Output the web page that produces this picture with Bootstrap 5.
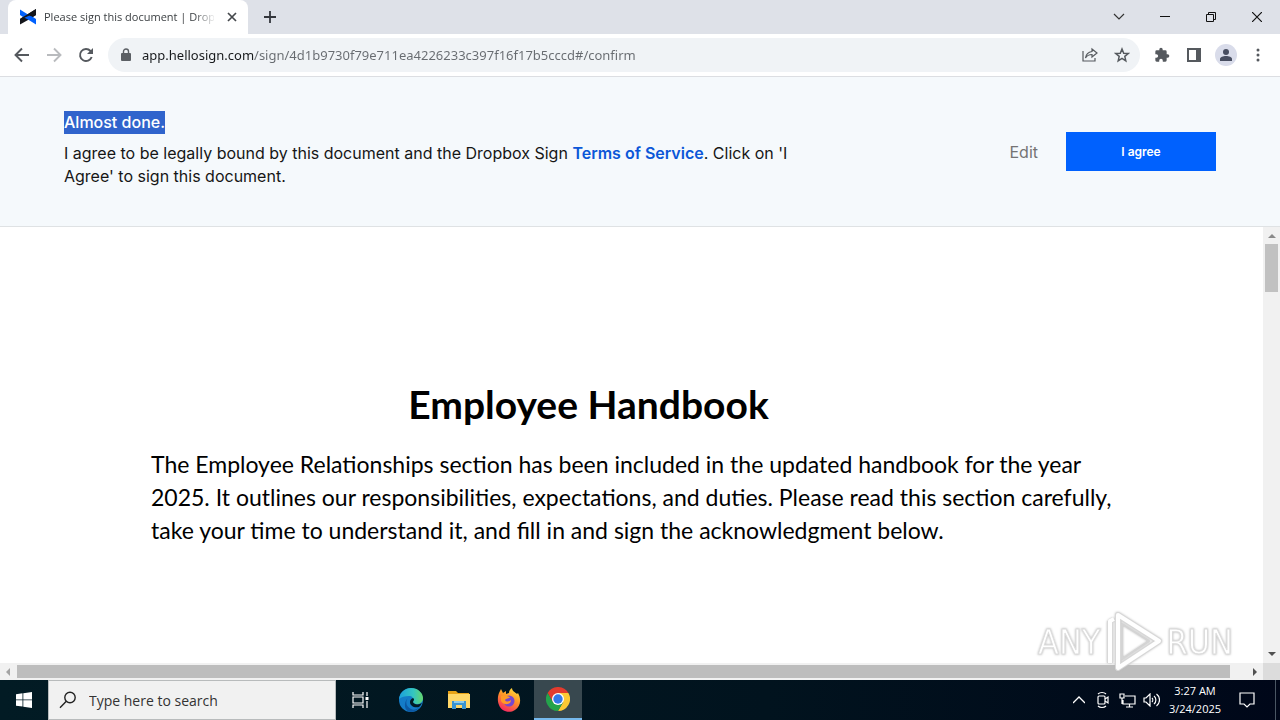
<!DOCTYPE html>
<html lang="en">
<head>
<meta charset="utf-8">
<meta name="viewport" content="width=device-width, initial-scale=1">
<title>Please sign this document | Dropbox Sign</title>
<link href="https://cdn.jsdelivr.net/npm/bootstrap@5.3.0/dist/css/bootstrap.min.css" rel="stylesheet">
<style>
  body { font-family: "Open Sans", "Noto Sans", sans-serif; color: #000; }
  svg { display: block; flex: none; }
  .plain { border: 0; background: none; padding: 0; color: inherit; display: flex; align-items: center; justify-content: center; }

  /* browser window */
  .tabstrip { height: 34px; background: #dee1e8; padding-left: 8px; color: #202124; }
  .browser-tab { width: 240px; height: 34px; background: #fff; border-radius: 8px 8px 0 0; padding: 0 8px 0 12px; }
  .tab-title { font-size: 11px; line-height: 18px; color: #3c4043; width: 170px; margin-left: 8px;
    -webkit-mask-image: linear-gradient(90deg, #000 150px, transparent 172px); mask-image: linear-gradient(90deg, #000 150px, transparent 172px); }
  .tab-close { width: 16px; height: 16px; }
  .win-btn { width: 46px; height: 30px; color: #111; }
  .toolbar { height: 43px; border-bottom: 1px solid #dcdee2; color: #55595e; padding: 0 6px; }
  .tool-btn { width: 32px; height: 32px; }
  .omnibox { height: 34px; border-radius: 17px; background: #f0f3f6; padding: 0 2px 0 12px; margin: 0 6px 0 6px; }
  .url { font-family: "Noto Sans", sans-serif; font-size: 13px; line-height: 20px; color: #5f6368; border: 0; outline: 0; padding: 0; margin-left: 10px;
    background: linear-gradient(90deg, #17191c 112px, #676b70 112px); -webkit-background-clip: text; background-clip: text; -webkit-text-fill-color: transparent; }
  .avatar { width: 22px; height: 22px; background: #d9dcea; color: #474d60; }

  /* signing banner */
  .confirm-bar { height: 150px; background: #f5f9fc; border-bottom: 1px solid #dfe2e4; padding: 0 64px; font-family: Inter, "Liberation Sans", sans-serif; }
  .confirm-copy { font-size: 16px; line-height: 23px; color: #161616; }
  .chosen { background: #3064cc; color: #fff; font-weight: 500; }
  .terms { color: #0b57d8; text-decoration: none; font-weight: 600; }
  .edit-link { color: #747474; text-decoration: none; font-size: 16px; }
  .agree-btn { width: 150px; height: 39px; background: #0061fe; color: #fff; border: 0; border-radius: 0; font-size: 12px; font-weight: 600; padding: 0; }
  .agree-btn:hover { background: #0057e5; }

  /* document */
  .viewer { min-height: 0; }
  .paper { background: #fff; font-family: Lato, Carlito, sans-serif; padding: 150px 86px 0 151px; overflow: hidden; }
  .paper h1 { font-size: 39px; line-height: 54px; font-weight: 700; margin: 0 151px 17px 0; text-align: center; }
  .paper p { font-size: 23px; line-height: 33px; margin: 0; white-space: nowrap; }
  .vbar { width: 17px; background: #f1f1f1; }
  .vthumb { height: 48px; background: #c1c1c1; margin: 0 2px; }
  .hbar { height: 17px; background: #f1f1f1; }
  .hthumb { background: #bdbdbd; margin: 2px 0; }
  .arrow { width: 17px; height: 17px; }
  .corner { width: 17px; background: #dcdcdc; }
  .watermark { right: 47px; bottom: 46px; font-family: "Liberation Sans Narrow", "DejaVu Sans Condensed", sans-serif; font-size: 34px; line-height: 64px; color: #fff; -webkit-text-stroke: 1px #ddd; filter: drop-shadow(0 0 1px #bbb); pointer-events: none; }

  /* taskbar */
  .taskbar { height: 40px; background: linear-gradient(90deg, #021b24, #01131e 60%, #000719); color: #fff; }
  .task-btn { width: 48px; height: 40px; }
  .task-gap { width: 50px; height: 40px; }
  .running { background: #38484f; border-bottom: 2px solid #76b9ed; }
  .search-area { width: 288px; height: 40px; background: #f1f1f1; border: 1px solid #b8bbbc; padding-left: 10px; color: #222; }
  .search-area input { border: 0; outline: 0; background: none; font-size: 14px; padding: 0; color: #333; }
  .search-area input::placeholder { color: #333; opacity: 1; }
  .tray { width: 24px; height: 40px; }
  .notice { width: 40px; height: 40px; }
  .clock { font-size: 11px; line-height: 18px; width: 64px; }
  .desk-edge { width: 5px; height: 40px; border-left: 1px solid #4a5663; }
</style>
</head>
<body class="vh-100 d-flex flex-column overflow-hidden">

<header>
  <div class="tabstrip d-flex align-items-center">
    <div class="browser-tab d-flex align-items-center">
      <svg width="16" height="16" viewBox="0 0 16 16"><path fill="#14161c" d="M16 0v6l-3 2-5 3-8 4.500V10l3-2 5-3z"/><path fill="#0061fe" d="M0 .5l8 5 5 2.500 3 2v5.500l-8-5L3 8 0 6z"/><path fill="#14161c" d="M16 0v6l-3 1.500-3.500-1L5 8.500 0 12v-2l3-2 5-3z"/></svg>
      <span class="tab-title text-nowrap">Please sign this document | Drop</span>
      <button class="plain ms-auto tab-close" aria-label="Close tab"><svg width="10" height="10" viewBox="0 0 10 10" stroke="#45484c" stroke-width="1.700"><path d="M1 1l8 8M9 1L1 9"/></svg></button>
    </div>
    <button class="plain tool-btn ms-1" aria-label="New tab"><svg class="ms-1" width="12" height="12" viewBox="0 0 12 12" stroke="#34373d" stroke-width="1.800"><path d="M6 0v12M0 6h12"/></svg></button>
    <div class="d-flex ms-auto">
      <button class="plain win-btn" aria-label="Search tabs"><svg width="12" height="8" viewBox="0 0 12 8" fill="none" stroke="#333" stroke-width="1.200"><path d="M1 1l5 5 5-5"/></svg></button>
      <button class="plain win-btn" aria-label="Minimize"><svg width="10" height="10" viewBox="0 0 10 10"><path fill="#111" d="M0 4h10v1H0z"/></svg></button>
      <button class="plain win-btn" aria-label="Restore"><svg width="10" height="10" viewBox="0 0 10 10" fill="none" stroke="#111"><path d="M.5 2.500h7v7h-7zM2.500 2.500v-2h7v7h-2"/></svg></button>
      <button class="plain win-btn" aria-label="Close"><svg width="10" height="10" viewBox="0 0 10 10" stroke="#111" stroke-width="1.200"><path d="M0 0l10 10M10 0L0 10"/></svg></button>
    </div>
  </div>
  <nav class="toolbar d-flex align-items-center" aria-label="Browser">
    <button class="plain tool-btn" aria-label="Back"><svg width="16" height="16" viewBox="0 0 16 16" fill="none" stroke="currentColor" stroke-width="1.900"><path d="M15 8H2M8 1.500L1.500 8 8 14.500"/></svg></button>
    <button class="plain tool-btn" aria-label="Forward"><svg width="16" height="16" viewBox="0 0 16 16" fill="none" stroke="#b9bbbe" stroke-width="1.900"><path d="M1 8h13M8 1.500L14.500 8 8 14.500"/></svg></button>
    <button class="plain tool-btn" aria-label="Reload"><svg width="16" height="16" viewBox="0 0 16 16" fill="none" stroke="currentColor" stroke-width="1.900"><path d="M13.700 10A6 6 0 1 1 12.500 4L14 5.500"/><path fill="currentColor" stroke="none" d="M15 1v6H9z"/></svg></button>
    <div class="omnibox d-flex align-items-center flex-grow-1">
      <svg width="12" height="14" viewBox="0 0 12 14"><rect x="1" y="5" width="10" height="8" rx="1" fill="#5b5f64"/><path d="M3.500 6V3.500a2.500 2.500 0 0 1 5 0V6" fill="none" stroke="#5b5f64" stroke-width="1.400"/></svg>
      <input class="url flex-grow-1" aria-label="Address" value="app.hellosign.com/sign/4d1b9730f79e711ea4226233c397f16f17b5cccd#/confirm">
      <button class="plain tool-btn" aria-label="Share"><svg width="16" height="16" viewBox="0 0 16 16" fill="none" stroke="currentColor" stroke-width="1.200"><path d="M1 4v10h12v-3M10 2l5 4-5 4V7.500C7 7.500 5 8.500 3.500 11 4 7 6.500 5 10 4.500z"/></svg></button>
      <button class="plain tool-btn" aria-label="Bookmark"><svg width="16" height="16" viewBox="0 0 16 16" fill="none" stroke="currentColor" stroke-width="1.500"><path d="M8 2l1.700 4.200 4.500.3-3.400 2.900 1 4.400L8 11.400l-3.800 2.400 1-4.400-3.400-2.900 4.500-.3z"/></svg></button>
    </div>
    <button class="plain tool-btn" aria-label="Extensions"><svg width="16" height="16" viewBox="0 0 24 24" fill="currentColor"><path d="M20.500 11H19V7a2 2 0 0 0-2-2h-4V3.500a2.500 2.500 0 0 0-5 0V5H4a2 2 0 0 0-2 2v3.800h1.500a2.700 2.700 0 0 1 0 5.400H2V20a2 2 0 0 0 2 2h3.800v-1.500a2.700 2.700 0 0 1 5.400 0V22H17a2 2 0 0 0 2-2v-4h1.500a2.500 2.500 0 0 0 0-5z"/></svg></button>
    <button class="plain tool-btn" aria-label="Side panel"><svg width="14" height="14" viewBox="0 0 14 14"><path fill="currentColor" fill-rule="evenodd" d="M0 0h14v14H0zM2 2v10h7V2z"/></svg></button>
    <button class="plain tool-btn" aria-label="Profile"><span class="avatar rounded-circle d-flex align-items-center justify-content-center"><svg width="14" height="14" viewBox="0 0 14 14" fill="currentColor"><circle cx="7" cy="4" r="3"/><path d="M1 13v-2c0-4 12-4 12 0v2z"/></svg></span></button>
    <button class="plain tool-btn" aria-label="Menu"><svg width="4" height="14" viewBox="0 0 4 14" fill="currentColor"><circle cx="2" cy="2" r="1.500"/><circle cx="2" cy="7" r="1.500"/><circle cx="2" cy="12" r="1.500"/></svg></button>
  </nav>
</header>

<section class="confirm-bar d-flex align-items-center">
  <div class="confirm-copy me-auto">
    <p class="mb-2"><span class="chosen d-inline-block">Almost done.</span></p>
    <p class="mb-1">I agree to be legally bound by this document and the Dropbox Sign <a href="#" class="terms">Terms of Service</a>. Click on 'I<br>Agree' to sign this document.</p>
  </div>
  <a href="#" class="edit-link me-4">Edit</a>
  <button type="button" class="btn agree-btn ms-1">I agree</button>
</section>

<main class="viewer d-flex flex-column flex-grow-1 position-relative">
  <div class="d-flex flex-grow-1 overflow-hidden">
    <article class="paper flex-grow-1">
      <h1>Employee Handbook</h1>
      <p>The Employee Relationships section has been included in the updated handbook for the year<br>2025. It outlines our responsibilities, expectations, and duties. Please read this section carefully,<br>take your time to understand it, and fill in and sign the acknowledgment below.</p>
    </article>
    <div class="vbar d-flex flex-column">
      <svg class="arrow" viewBox="0 0 17 17"><path fill="#8a8a8a" d="M5 11h8L9 7z"/></svg>
      <div class="vthumb"></div>
      <svg class="arrow mt-auto" viewBox="0 0 17 17"><path fill="#505050" d="M5 6h8l-4 4z"/></svg>
    </div>
  </div>
  <div class="hbar d-flex">
    <svg class="arrow" viewBox="0 0 17 17"><path fill="#a3a3a3" d="M10 5v8L6 9z"/></svg>
    <div class="hthumb flex-grow-1"></div>
    <div class="d-flex ps-3"><svg class="arrow" viewBox="0 0 17 17"><path fill="#505050" d="M7 5v8l4-4z"/></svg></div>
    <div class="corner"></div>
  </div>
</main>

<div class="watermark position-absolute d-flex align-items-center">
  <span>ANY</span>
  <svg width="66" height="64" viewBox="0 0 66 64" fill="none" stroke-linejoin="round"><path stroke="#d8d8d8" stroke-width="6" d="M10 53V11M18 5l41 26-41 27z"/><path stroke="#fff" stroke-width="4" d="M10 53V11l4-2M18 5l41 26-41 27z"/><path stroke="#d4d4d4" stroke-width="2" d="M22 14l27 17-27 18z"/></svg>
  <span>RUN</span>
</div>

<footer class="taskbar d-flex align-items-center">
  <button class="plain task-btn" aria-label="Start"><svg width="16" height="16" viewBox="0 0 16 16" fill="#fff"><path d="M0 2.200l6.500-.9v6.200H0zM7.300 1.200L16 0v7.500H7.300zM0 8.300h6.500v6.300L0 13.700zM7.300 8.300H16V16l-8.700-1.200z"/></svg></button>
  <label class="search-area d-flex align-items-center">
    <svg width="18" height="18" viewBox="0 0 18 18" fill="none" stroke="#222" stroke-width="1.400"><circle cx="11" cy="6.500" r="5.200"/><path d="M7.300 10.300L1 16.700"/></svg>
    <input class="ms-2 ps-1 flex-grow-1" type="search" aria-label="Search" placeholder="Type here to search">
  </label>
  <button class="plain task-btn" aria-label="Task view"><svg width="17" height="16" viewBox="0 0 17 16" fill="none" stroke="#fff" stroke-width="1.200"><path d="M1 0v3h10V0M1 5h10v6H1zM1 16v-3h10v3M15 0v4M15 9v7"/><path stroke-width="3" d="M13.500 6.500h3"/></svg></button>
  <button class="plain task-gap" aria-label="Microsoft Edge"><svg class="ms-1" width="24" height="24" viewBox="0 0 24 24"><defs><linearGradient id="edgeTop" x1="0" x2="1"><stop stop-color="#1b9fdc"/><stop offset=".6" stop-color="#34c6c1"/><stop offset="1" stop-color="#65d66c"/></linearGradient></defs><circle cx="12" cy="12" r="12" fill="#147cc8"/><path fill="url(#edgeTop)" d="M0 11C1 4 6 0 12 0c7 0 12 5 12 10 0 4-3 6-6 6-3 0-5-1-4-3 1-3-1-5-4-5-4 0-8 1-10 3z"/><path fill="#0c59a4" d="M9 10c-3 3-2 9 3 11 4 2 8-1 9.500-3A12 12 0 0 1 12 24C5 24 4 14 9 10z"/><path fill="#021b24" d="M14 10c2 1 .5 3 0 4 1 3 6 3 9 1-1 2-2 3-3 4-5 1-9-1-9-5 0-2 1-3 3-4z"/></svg></button>
  <button class="plain task-gap" aria-label="File Explorer"><svg width="22" height="20" viewBox="0 0 22 20"><path fill="#e8a317" d="M0 1h8l2 2h11v4H0z"/><path fill="#ffd768" d="M0 4h22v14H0z"/><path fill="#3a94d1" d="M4 11h14v8h-4v-4H8v4H4z"/><path fill="#8ccbed" d="M6 11h10v2H6z"/></svg></button>
  <button class="plain task-gap" aria-label="Firefox"><svg width="24" height="24" viewBox="0 0 24 24"><defs><linearGradient id="fox" x1=".8" y1="0" x2=".3" y2="1"><stop stop-color="#ffe13d"/><stop offset=".45" stop-color="#ff9527"/><stop offset="1" stop-color="#f52463"/></linearGradient></defs><path fill="url(#fox)" d="M2 5l2-4 2 4 3-2v3l3-1c0-2 1-4 3-5 0 3 3 4 5 6l1-1c4 7 2 14-3 17-6 4-14 1-16-5C0 12 1 8 2 5z"/><circle cx="12" cy="13" r="5.500" fill="#7747cf"/><path fill="#ff9a26" d="M4 8c3-2 6 0 9 1-1 2-4 1-5 3 1 2 4 2 6 0 0 5-7 6-10 1z"/></svg></button>
  <button class="plain task-btn running" aria-label="Google Chrome"><svg width="24" height="24" viewBox="0 0 24 24"><path fill="#e33b2e" d="M1.600 6A12 12 0 0 1 22.400 6H12z"/><path fill="#e33b2e" d="M1.600 6L6.800 15 12 6z"/><path fill="#fcc934" d="M22.400 6A12 12 0 0 1 12 24l5.200-9L12 6z"/><path fill="#24a34b" d="M12 24A12 12 0 0 1 1.600 6l5.200 9h10.400z"/><circle cx="12" cy="12" r="6" fill="#fff"/><circle cx="12" cy="12" r="4.700" fill="#3478e8"/></svg></button>
  <div class="d-flex align-items-center ms-auto">
    <button class="plain tray" aria-label="Show hidden icons"><svg width="12" height="8" viewBox="0 0 12 8" fill="none" stroke="#fff" stroke-width="1.300"><path d="M0 7l6-6 6 6"/></svg></button>
    <button class="plain tray" aria-label="Camera"><svg width="14" height="18" viewBox="0 0 14 18" fill="none" stroke="#fff" stroke-width="1.200"><rect x="2" y="5" width="7" height="8" rx="1"/><path d="M9 8l3-2v6l-3-2M2 3c2-2 6-2 8 0M2 15c2 2 6 2 8 0"/></svg></button>
    <button class="plain tray" aria-label="Network"><svg width="17" height="15" viewBox="0 0 17 15" fill="none" stroke="#fff" stroke-width="1.200"><path d="M6 3h10v8H4V7M7 14h7M10.500 11v3M1 1h4v4H1zM3 5v6"/></svg></button>
    <button class="plain tray" aria-label="Volume"><svg width="17" height="14" viewBox="0 0 17 14" fill="none" stroke="#fff" stroke-width="1.200"><path d="M1 5h2l4-4v12L3 9H1zM9 5c1 1 1 3 0 4M11 3c2.500 2 2.500 6 0 8M13.500 1c4 3 4 9 0 12"/></svg></button>
    <div class="clock text-center">3:27 AM<br>3/24/2025</div>
    <button class="plain notice me-2" aria-label="Notifications"><svg width="16" height="16" viewBox="0 0 16 16" fill="none" stroke="#fff" stroke-width="1.200"><path d="M1 1h14v11h-4l-3 3-3-3H1z"/></svg></button>
    <div class="desk-edge"></div>
  </div>
</footer>

<script src="https://cdn.jsdelivr.net/npm/bootstrap@5.3.0/dist/js/bootstrap.bundle.min.js"></script>
</body>
</html>
